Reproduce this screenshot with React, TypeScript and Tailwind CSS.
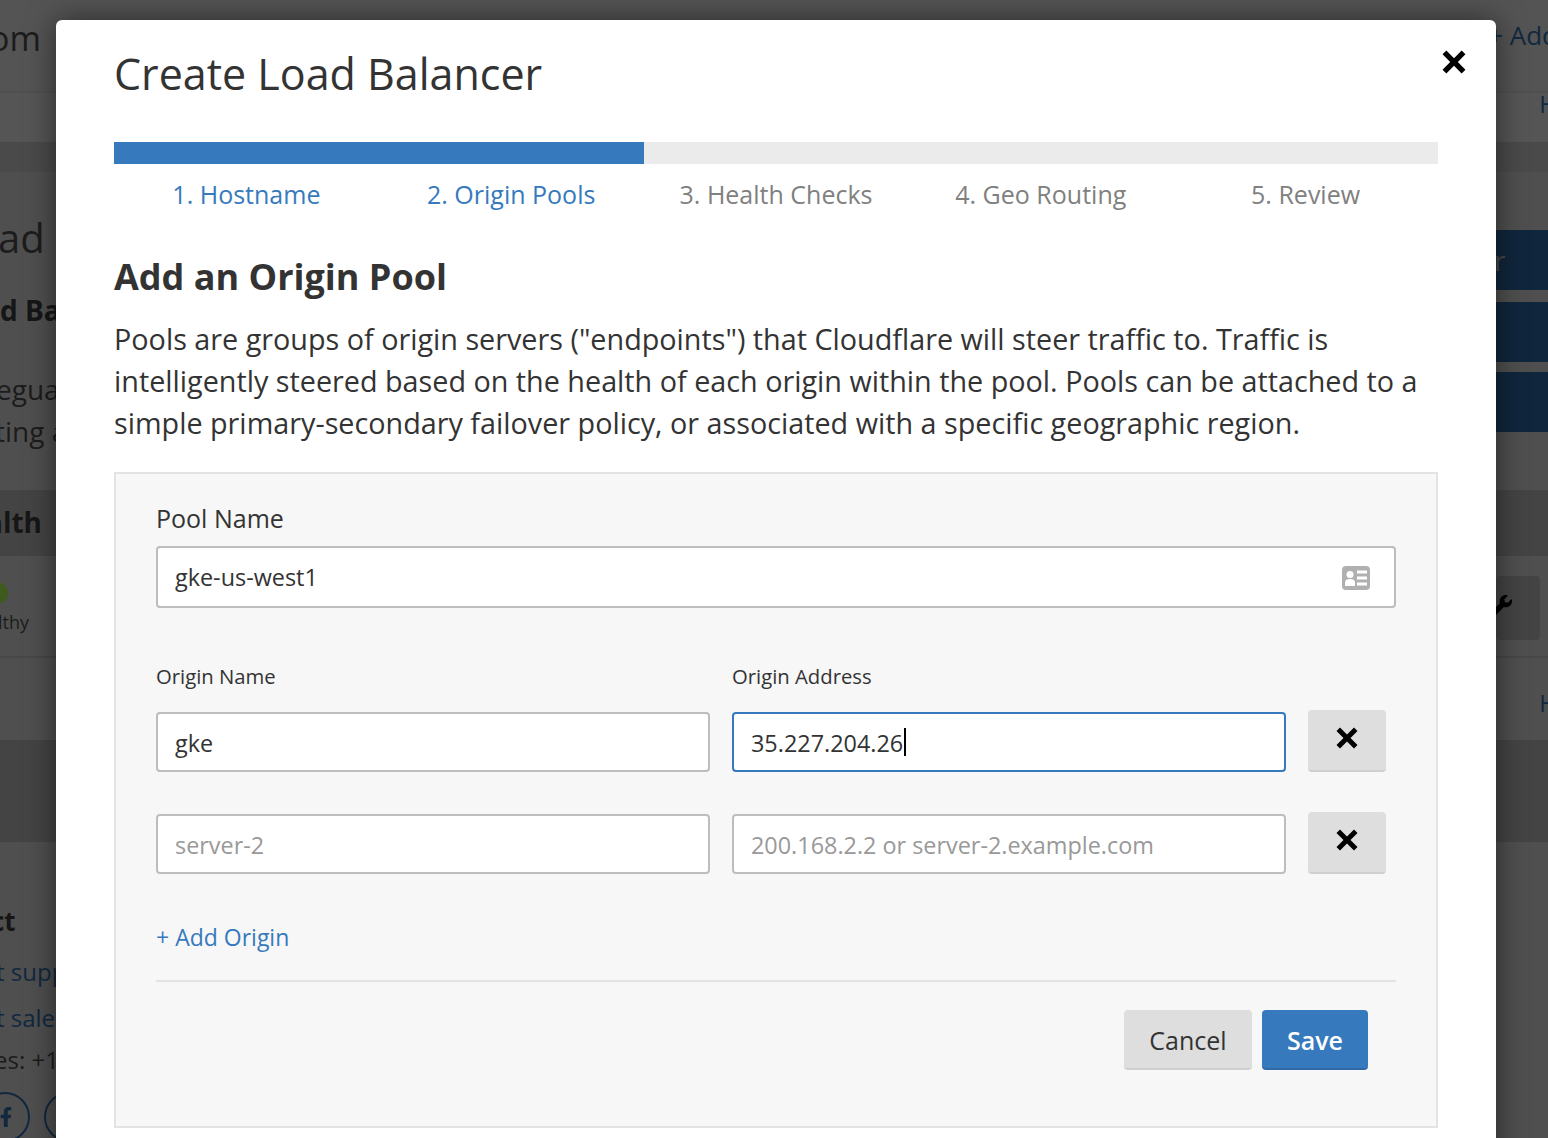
import { FaFacebookF, FaWrench } from "react-icons/fa";

const steps = [
  { label: "1. Hostname", done: true },
  { label: "2. Origin Pools", done: true },
  { label: "3. Health Checks", done: false },
  { label: "4. Geo Routing", done: false },
  { label: "5. Review", done: false },
];

function CloseIcon({ size }: { size: number }) {
  return (
    <svg width={size} height={size} viewBox="0 0 22 22" fill="currentColor" aria-hidden="true">
      <path d="M4 .5l7 7 7-7L21.5 4l-7 7 7 7-3.5 3.5-7-7-7 7L.5 18l7-7-7-7z" />
    </svg>
  );
}

function RemoveButton() {
  return (
    <button
      type="button"
      className="flex h-[62px] w-[78px] shrink-0 items-center justify-center rounded-[4px] border-b-2 border-[#cfcfcf] bg-[#dedede] pb-1 text-black"
      aria-label="Remove origin"
    >
      <CloseIcon size={22} />
    </button>
  );
}

function IdCardIcon() {
  return (
    <svg width="28" height="24" viewBox="0 0 28 24" aria-hidden="true">
      <rect width="28" height="24" rx="4" fill="#b0b0b0" />
      <circle cx="8" cy="8.5" r="3.5" fill="#fff" />
      <path d="M3 20v-3.5C3 14 5 13 8 13s5 1 5 3.5V20z" fill="#fff" />
      <path d="M15 4.5h10v3H15zM15 10.5h10v3H15zM15 16.5h10v3H15z" fill="#fff" />
    </svg>
  );
}

const inputClass =
  "w-full rounded-[4px] border-2 border-[#bdbdbd] bg-white px-[17px] text-[23.4px] text-[#333] outline-none placeholder:text-[#999]";
const rowInputClass = `${inputClass} h-[60px] pt-[2px]`;

function Backdrop() {
  return (
    <div className="flex h-[1138px] flex-col overflow-hidden bg-[#4f4f4f] text-[#1c1c1c]">
      <div className="flex h-[93px] shrink-0 justify-between border-b-2 border-[#505050] bg-[#545454] pt-[13px]">
        <p className="ml-[-11px] text-[34px] leading-[50px]">om</p>
        <p className="mr-[-10px] text-[26px] leading-[44px] text-[#12283f]">+ Add</p>
      </div>
      <div className="flex h-[49px] shrink-0 justify-end bg-[#555555]">
        <p className="mr-[-9px] text-[24px] leading-[22px] text-[#12283f]">H</p>
      </div>
      <div className="h-[30px] shrink-0 bg-[#4a4a4a]" />
      <div className="flex h-[318px] shrink-0 justify-between">
        <div className="w-[56px] overflow-hidden whitespace-nowrap">
          <p className="mt-[36px] ml-[-2px] text-[40px] leading-[60px]">ad</p>
          <p className="mt-[21px] text-[28px] leading-[42px] font-bold text-[#161616]">d Ba</p>
          <p className="ml-[-4px] mt-[37px] text-[28px] leading-[42px]">egua</p>
          <p className="ml-[-5px] text-[28px] leading-[42px]">ting a</p>
        </div>
        <div className="mt-[58px] flex w-[52px] flex-col gap-[12px] overflow-hidden">
          <div className="h-[60px] bg-[#10263c] text-[28px] leading-[60px] text-[#4a4a4a]">
            <span className="ml-[-2px]">r</span>
          </div>
          <div className="h-[60px] bg-[#10263c]" />
          <div className="-mt-[2px] h-[60px] bg-[#10263c]" />
        </div>
      </div>
      <div className="h-[66px] shrink-0 bg-[#444444] pt-[11px] text-[28px] leading-[42px] font-bold text-[#161616]">
        <p className="ml-[-14px]">alth</p>
      </div>
      <div className="flex h-[102px] shrink-0 justify-between border-b-2 border-[#474747]">
        <div className="w-[56px] overflow-hidden">
          <div className="ml-[-14px] mt-[26px] h-[22px] w-[22px] rounded-full bg-[#3e5a1c]" />
          <p className="ml-[-2px] mt-[3px] text-[18px] leading-[30px]">lthy</p>
        </div>
        <div className="mr-[8px] mt-[20px] flex h-[64px] w-[44px] items-center overflow-hidden rounded-[4px] bg-[#444444] pb-[4px] text-[22px] text-black">
          <FaWrench className="ml-[-6px]" />
        </div>
      </div>
      <div className="flex h-[82px] shrink-0 justify-end pt-[34px]">
        <p className="mr-[-9px] text-[24px] leading-[22px] text-[#12283f]">H</p>
      </div>
      <div className="h-[102px] shrink-0 bg-[#444444]" />
      <div className="w-[56px] shrink-0 overflow-hidden whitespace-nowrap">
        <p className="ml-[-9px] mt-[59px] text-[26px] leading-[40px] font-bold text-[#161616]">ct</p>
        <p className="ml-[-4px] mt-[13px] text-[24px] leading-[36px] text-[#12283f]">t supp</p>
        <p className="ml-[-4px] mt-[10px] text-[24px] leading-[36px] text-[#12283f]">t sale</p>
        <p className="ml-[-6px] mt-[6px] text-[24px] leading-[36px]">es: +1</p>
        <div className="mt-[14px] flex gap-[14px]">
          <div className="ml-[-20px] flex h-[50px] w-[50px] shrink-0 items-center justify-center rounded-full border-2 border-[#12283f] text-[20px] text-[#12283f]">
            <FaFacebookF className="ml-[1px]" />
          </div>
          <div className="h-[50px] w-[50px] shrink-0 rounded-full border-2 border-[#12283f]" />
        </div>
      </div>
    </div>
  );
}

export default function App() {
  return (
    <div className="relative h-[1138px] w-[1548px] overflow-hidden font-['Open_Sans',sans-serif] text-[#333]">
      <Backdrop />
      <div className="absolute left-[56px] top-[20px] h-[1200px] w-[1440px] rounded-[6px] bg-white px-[58px] shadow-[0_0_30px_rgba(0,0,0,0.5)]">
        <button type="button" className="absolute right-[30px] top-[30px] text-black" aria-label="Close">
          <CloseIcon size={24} />
        </button>
        <h1 className="pt-[19px] text-[43px] leading-[70px] text-[#333]">Create Load Balancer</h1>

        <div className="mt-[33px] h-[22px] bg-[#ebebeb]">
          <div className="h-full w-[40%] bg-[#367abd]" />
        </div>
        <div className="mt-[11px] grid grid-cols-5 text-center text-[25px] leading-[38px]">
          {steps.map((step) => (
            <span key={step.label} className={step.done ? "text-[#367abd]" : "text-[#808080]"}>
              {step.label}
            </span>
          ))}
        </div>

        <h2 className="mt-[39px] text-[36px] leading-[50px] font-bold text-[#333]">Add an Origin Pool</h2>
        <p className="mt-[16px] text-[28.75px] leading-[42px] text-[#333]">
          Pools are groups of origin servers ("endpoints") that Cloudflare will steer traffic to. Traffic is
          intelligently steered based on the health of each origin within the pool. Pools can be attached to a
          simple primary-secondary failover policy, or associated with a specific geographic region.
        </p>

        <div className="mt-[28px] h-[656px] border-2 border-[#e3e3e3] bg-[#f7f7f7] px-[40px] pt-[24px]">
          <label className="block text-[25px] leading-[40px]">Pool Name</label>
          <div className="relative mt-[8px]">
            <input className={`${inputClass} h-[62px]`} defaultValue="gke-us-west1" readOnly />
            <span className="absolute right-[26px] top-[20px]">
              <IdCardIcon />
            </span>
          </div>

          <div className="mt-[51px] grid grid-cols-[554px_554px] gap-x-[22px] text-[20.3px] leading-[34px]">
            <label>Origin Name</label>
            <label>Origin Address</label>
          </div>
          <div className="mt-[17px] flex flex-col gap-[40px]">
            <div className="flex items-start gap-[22px]">
              <div className="mt-[2px] w-[554px]">
                <input className={rowInputClass} defaultValue="gke" readOnly />
              </div>
              <div className="mt-[2px] flex h-[60px] w-[554px] items-center rounded-[4px] border-2 border-[#367abd] bg-white px-[17px] pt-[3px] text-[23.4px] text-[#333]">
                35.227.204.26
                <span className="ml-[1px] mb-[3px] h-[28px] w-[2px] bg-black" />
              </div>
              <RemoveButton />
            </div>
            <div className="flex items-start gap-[22px]">
              <div className="mt-[2px] w-[554px]">
                <input className={rowInputClass} placeholder="server-2" readOnly />
              </div>
              <div className="mt-[2px] w-[554px]">
                <input className={rowInputClass} placeholder="200.168.2.2 or server-2.example.com" readOnly />
              </div>
              <RemoveButton />
            </div>
          </div>

          <a className="mt-[43px] block text-[23px] leading-[40px] text-[#367abd]">+ Add Origin</a>
          <div className="mt-[23px] h-[2px] bg-[#e3e3e3]" />
          <div className="mt-[28px] flex justify-end gap-[10px] pr-[28px]">
            <button
              type="button"
              className="h-[60px] w-[128px] rounded-[4px] border-b-2 border-[#cfcfcf] bg-[#dedede] pt-[3px] text-[25px] text-[#333]"
            >
              Cancel
            </button>
            <button
              type="button"
              className="h-[60px] w-[106px] rounded-[4px] border-b-2 border-[#2d6aa6] bg-[#367abd] pt-[3px] text-[25px] font-semibold text-white"
            >
              Save
            </button>
          </div>
        </div>
      </div>
    </div>
  );
}
